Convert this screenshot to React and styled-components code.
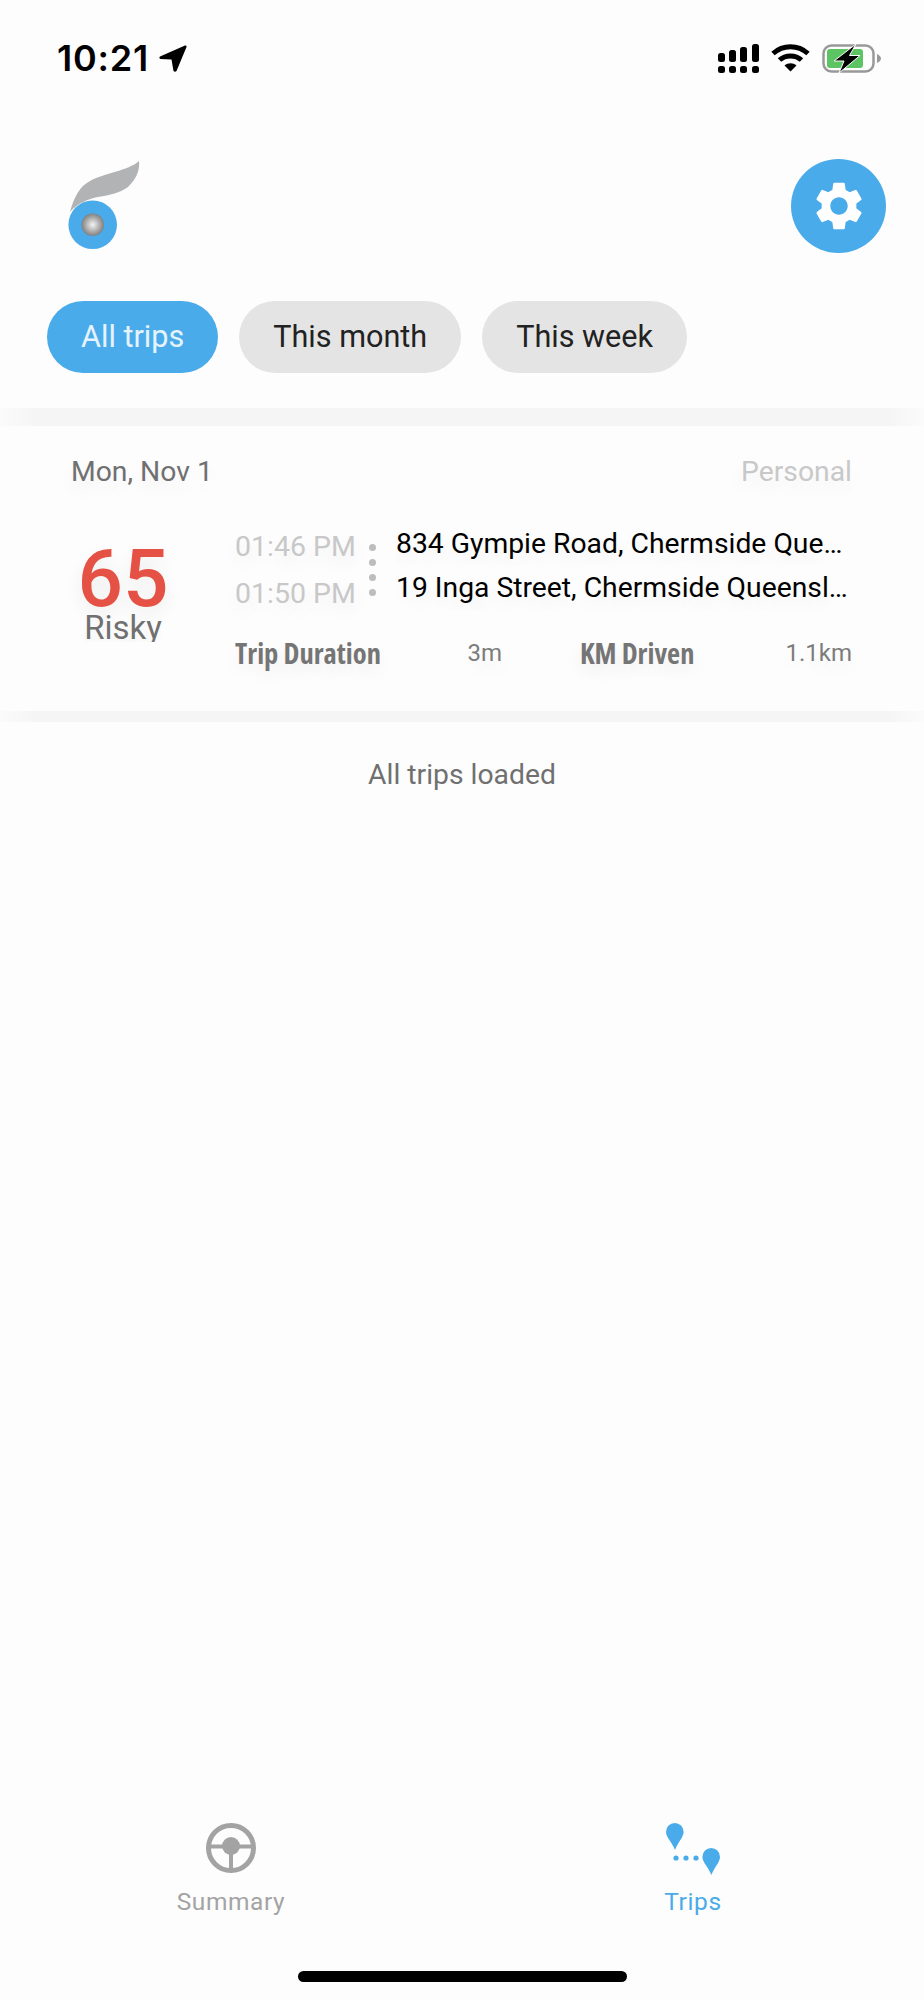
import React from 'react';
import styled, { createGlobalStyle } from 'styled-components';
import { MdSettings } from 'react-icons/md';

const BLUE = '#4aabea';

const GlobalStyle = createGlobalStyle`
  html, body {
    margin: 0;
    padding: 0;
    background: #fdfdfd;
  }
  * {
    box-sizing: border-box;
  }
`;

export default function App() {
  return (
    <>
      <GlobalStyle />
      <Screen>
        <StatusBar>
          <Clock>
            <Time>10:21</Time>
            <LocationArrow />
          </Clock>
          <StatusIcons>
            <Signal />
            <Wifi />
            <Battery />
          </StatusIcons>
        </StatusBar>

        <Header>
          <TopRow>
            <Logo />
            <SettingsButton>
              <MdSettings size={58} color="#fff" />
            </SettingsButton>
          </TopRow>
          <Filters>
            <Chip $active>All trips</Chip>
            <Chip>This month</Chip>
            <Chip>This week</Chip>
          </Filters>
        </Header>

        <Strip $height={18} />

        <TripCard>
          <CardHead>
            <DateText>Mon, Nov 1</DateText>
            <TripType>Personal</TripType>
          </CardHead>
          <CardBody>
            <ScoreBlock>
              <Score>65</Score>
              <ScoreLabel>Risky</ScoreLabel>
            </ScoreBlock>
            <Details>
              <Route>
                <Times>
                  <span>01:46 PM</span>
                  <span>01:50 PM</span>
                </Times>
                <RouteDots>
                  <i />
                  <i />
                  <i />
                  <i />
                </RouteDots>
                <Places>
                  <Place>834 Gympie Road, Chermside Queensland</Place>
                  <Place>19 Inga Street, Chermside Queensland</Place>
                </Places>
              </Route>
              <Stats>
                <Stat>
                  <StatName>Trip Duration</StatName>
                  <StatValue>3m</StatValue>
                </Stat>
                <Stat>
                  <StatName>KM Driven</StatName>
                  <StatValue>1.1km</StatValue>
                </Stat>
              </Stats>
            </Details>
          </CardBody>
        </TripCard>

        <Strip $height={11} />

        <LoadedNote>All trips loaded</LoadedNote>

        <TabBar>
          <Tab>
            <TabIcon>
              <SteeringWheel />
            </TabIcon>
            <TabLabel>Summary</TabLabel>
          </Tab>
          <Tab>
            <TabIcon>
              <TripsIcon />
            </TabIcon>
            <TabLabel $active>Trips</TabLabel>
          </Tab>
        </TabBar>
        <HomeIndicator />
      </Screen>
    </>
  );
}

function LocationArrow() {
  return (
    <svg width="30" height="29" viewBox="0 0 30 29">
      <path d="M27 1.5 L2 12.5 Q0.5 14 2.5 15 L13.5 15.5 L15.5 27 Q17 28.5 18.5 27 L28.5 3 Q29 1 27 1.5 Z" fill="#000" />
    </svg>
  );
}

function Signal() {
  return (
    <svg width="41" height="29" viewBox="0 0 41 29" fill="#000">
      <rect x="0" y="9" width="7" height="9" rx="2.5" />
      <rect x="11" y="6" width="7" height="12" rx="2.5" />
      <rect x="22" y="3" width="7" height="15" rx="2.5" />
      <rect x="34" y="0" width="7" height="18" rx="2.5" />
      <rect x="0" y="22" width="7" height="7" rx="2.5" />
      <rect x="11" y="22" width="7" height="7" rx="2.5" />
      <rect x="22" y="22" width="7" height="7" rx="2.5" />
      <rect x="34" y="22" width="7" height="7" rx="2.5" />
    </svg>
  );
}

function Wifi() {
  return (
    <svg width="39" height="28" viewBox="0 0 39 28" fill="none" stroke="#000" strokeWidth="5">
      <path d="M2 9.5 C12 0.5 27 0.5 37 9.5" />
      <path d="M8.5 16 C14.5 10.5 24.5 10.5 30.5 16" />
      <path d="M19.5 27.5 L13.5 21.5 C17 18.5 22 18.5 25.5 21.5 Z" fill="#000" stroke="none" />
    </svg>
  );
}

function Battery() {
  return (
    <svg width="60" height="29" viewBox="0 0 60 29">
      <rect x="1.5" y="1.5" width="50" height="26" rx="8" fill="none" stroke="#999" strokeWidth="2.5" />
      <rect x="5" y="5" width="36" height="19" rx="3" fill="#5cc462" />
      <path d="M55 10 Q59 12 59 14.5 Q59 17 55 19 Z" fill="#999" />
      <path d="M34 0 L12 17 H22 L17 29 L38 11.5 H27.5 Z" fill="#000" stroke="#fff" strokeWidth="1" strokeLinejoin="round" />
    </svg>
  );
}

function Logo() {
  return (
    <LogoBox>
      <svg width="72" height="92" viewBox="-2 0 72 92">
        <defs>
          <radialGradient id="ball">
            <stop offset="0" stopColor="#f4f4f4" />
            <stop offset="1" stopColor="#808080" />
          </radialGradient>
        </defs>
        <path
          d="M0 53 C4 38 10 27 20 22 C34 14 58 12 69 2 C70 12 66 20 58 28 C50 34 40 36 28 38 C18 40 8 44 0 53 Z"
          fill="#b2b3b5"
        />
        <circle cx="22.7" cy="65.7" r="24.3" fill={BLUE} />
        <circle cx="22.7" cy="65.7" r="11.3" fill="url(#ball)" />
      </svg>
    </LogoBox>
  );
}

function SteeringWheel() {
  return (
    <svg width="50" height="50" viewBox="0 0 50 50" fill="#a3a3a3">
      <circle cx="25" cy="25" r="22.5" fill="none" stroke="#a3a3a3" strokeWidth="5" />
      <circle cx="25" cy="23" r="9" />
      <rect x="3" y="21.5" width="44" height="4" />
      <rect x="23" y="25" width="4" height="22" />
    </svg>
  );
}

function TripsIcon() {
  return (
    <svg width="54" height="52" viewBox="0 0 54 52" fill={BLUE}>
      <path d="M9 27 C6.5 20 0 14.5 0 8.8 A8.8 8.8 0 0 1 17.6 8.8 C17.6 14.5 11.5 20 9 27 Z" />
      <path d="M45.4 52 C42.9 45 36.4 39.5 36.4 33.8 A8.8 8.8 0 0 1 54 33.8 C54 39.5 47.9 45 45.4 52 Z" />
      <circle cx="10" cy="35" r="2.6" />
      <circle cx="20" cy="35" r="2.6" />
      <circle cx="30" cy="35" r="2.6" />
    </svg>
  );
}

const Screen = styled.div`
  display: flex;
  flex-direction: column;
  height: 2000px;
  background: #fdfdfd;
  font-family: Roboto, "Liberation Sans", sans-serif;
  overflow: hidden;
`;

const StatusBar = styled.div`
  display: flex;
  justify-content: space-between;
  align-items: flex-start;
  height: 159px;
  padding: 44px 42px 0 57px;
`;

const Clock = styled.div`
  display: flex;
  align-items: center;
  gap: 9px;
`;

const Time = styled.span`
  font-family: Inter, "Liberation Sans", sans-serif;
  font-size: 36px;
  font-weight: 600;
  line-height: 29px;
  letter-spacing: 0.8px;
  color: #000;
`;

const StatusIcons = styled.div`
  display: flex;
  align-items: flex-start;
  gap: 12px;
`;

const Header = styled.div`
  padding: 0 38px 35px 47px;
`;

const TopRow = styled.div`
  display: flex;
  justify-content: space-between;
  align-items: flex-start;
`;

const LogoBox = styled.div`
  margin-left: 21px;
  height: 92px;
`;

const SettingsButton = styled.div`
  display: flex;
  align-items: center;
  justify-content: center;
  width: 95px;
  height: 94px;
  border-radius: 50%;
  background: ${BLUE};
`;

const Filters = styled.div`
  display: flex;
  gap: 21px;
  margin-top: 48px;
`;

const Chip = styled.div`
  display: flex;
  align-items: center;
  height: 72px;
  padding: 0 34px 2px;
  border-radius: 36px;
  font-size: 30.6px;
  background: ${(p) => (p.$active ? BLUE : '#e4e4e4')};
  color: ${(p) => (p.$active ? '#e6f3fc' : '#222')};
`;

const Strip = styled.div`
  flex: none;
  height: ${(p) => p.$height}px;
  background: linear-gradient(to right, #fbfbfb, #f5f5f5 4%, #f5f5f5 96%, #fbfbfb);
`;

const TripCard = styled.div`
  height: 285px;
  padding: 27px 72px 0 71px;
  text-shadow: 0 8px 18px rgba(0, 0, 0, 0.07);
`;

const CardHead = styled.div`
  display: flex;
  justify-content: space-between;
  align-items: center;
  height: 36px;
  font-size: 28.3px;
`;

const DateText = styled.span`
  color: #707070;
`;

const TripType = styled.span`
  color: #c8c8c8;
`;

const CardBody = styled.div`
  display: flex;
  gap: 60px;
  margin-top: 33px;
`;

const ScoreBlock = styled.div`
  display: flex;
  flex-direction: column;
  align-items: center;
  width: 104px;
  padding-top: 28px;
`;

const Score = styled.div`
  font-size: 80px;
  font-weight: 500;
  line-height: 58px;
  color: #e55245;
`;

const ScoreLabel = styled.div`
  height: 32px;
  margin-top: 2px;
  overflow: hidden;
  font-size: 33px;
  line-height: 36px;
  color: #707070;
`;

const Details = styled.div`
  flex: 1;
  min-width: 0;
`;

const Route = styled.div`
  display: flex;
`;

const Times = styled.div`
  display: flex;
  flex-direction: column;
  width: 134px;
  padding-top: 1px;
  font-size: 28.5px;
  line-height: 47px;
  color: #c8c8c8;
`;

const RouteDots = styled.div`
  display: flex;
  flex-direction: column;
  gap: 8px;
  width: 27px;
  padding-top: 22px;

  i {
    display: block;
    width: 7px;
    height: 7px;
    border-radius: 50%;
    background: #bdbdbd;
  }
`;

const Places = styled.div`
  flex: 1;
  min-width: 0;
`;

const Place = styled.div`
  overflow: hidden;
  white-space: nowrap;
  text-overflow: ellipsis;
  font-size: 28.3px;
  line-height: 44px;
  color: #000;
`;

const Stats = styled.div`
  display: grid;
  grid-template-columns: 267px 272px;
  gap: 78px;
  margin-top: 17px;
`;

const Stat = styled.div`
  display: flex;
  justify-content: space-between;
  align-items: center;
`;

const StatName = styled.span`
  font-family: "Open Sans", Roboto, sans-serif;
  font-size: 28.5px;
  font-weight: 700;
  font-stretch: 75%;
  color: #757575;
`;

const StatValue = styled.span`
  font-size: 24px;
  color: #7c7c7c;
`;

const LoadedNote = styled.div`
  margin-top: 35px;
  text-align: center;
  font-size: 28.3px;
  line-height: 36px;
  color: #707070;
`;

const TabBar = styled.div`
  display: grid;
  grid-template-columns: 1fr 1fr;
  margin-top: auto;
`;

const Tab = styled.div`
  display: flex;
  flex-direction: column;
  align-items: center;
  gap: 12px;
`;

const TabIcon = styled.div`
  height: 52px;
`;

const TabLabel = styled.span`
  font-size: 24.5px;
  line-height: 30px;
  letter-spacing: 0.6px;
  color: ${(p) => (p.$active ? BLUE : '#a3a3a3')};
`;

const HomeIndicator = styled.div`
  flex: none;
  align-self: center;
  width: 329px;
  height: 11px;
  margin: 54px 0 18px;
  border-radius: 6px;
  background: #000;
`;
